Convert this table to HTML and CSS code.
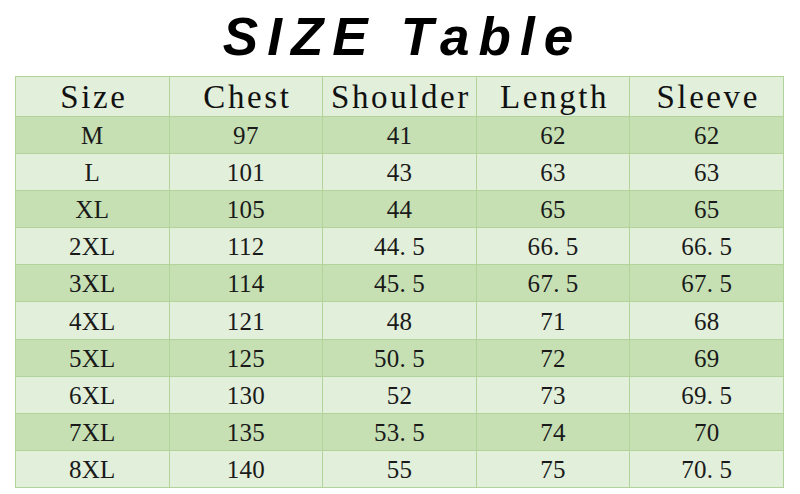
FILE: index.html
```html
<!DOCTYPE html>
<html lang="en">
<head>
<meta charset="utf-8">
<title>SIZE Table</title>
<link rel="stylesheet" href="styles.css">
</head>
<body>
<div class="page">
  <h1 class="title"><span>SIZE</span><span>Table</span></h1>
  <div class="table">
    <div class="row head"><div class="cell">Size</div><div class="cell">Chest</div><div class="cell">Shoulder</div><div class="cell">Length</div><div class="cell">Sleeve</div></div>
    <div class="row dark"><div class="cell">M</div><div class="cell">97</div><div class="cell">41</div><div class="cell">62</div><div class="cell">62</div></div>
    <div class="row light"><div class="cell">L</div><div class="cell">101</div><div class="cell">43</div><div class="cell">63</div><div class="cell">63</div></div>
    <div class="row dark"><div class="cell">XL</div><div class="cell">105</div><div class="cell">44</div><div class="cell">65</div><div class="cell">65</div></div>
    <div class="row light"><div class="cell">2XL</div><div class="cell">112</div><div class="cell">44<span class="dot">.</span>5</div><div class="cell">66<span class="dot">.</span>5</div><div class="cell">66<span class="dot">.</span>5</div></div>
    <div class="row dark"><div class="cell">3XL</div><div class="cell">114</div><div class="cell">45<span class="dot">.</span>5</div><div class="cell">67<span class="dot">.</span>5</div><div class="cell">67<span class="dot">.</span>5</div></div>
    <div class="row light"><div class="cell">4XL</div><div class="cell">121</div><div class="cell">48</div><div class="cell">71</div><div class="cell">68</div></div>
    <div class="row dark"><div class="cell">5XL</div><div class="cell">125</div><div class="cell">50<span class="dot">.</span>5</div><div class="cell">72</div><div class="cell">69</div></div>
    <div class="row light"><div class="cell">6XL</div><div class="cell">130</div><div class="cell">52</div><div class="cell">73</div><div class="cell">69<span class="dot">.</span>5</div></div>
    <div class="row dark"><div class="cell">7XL</div><div class="cell">135</div><div class="cell">53<span class="dot">.</span>5</div><div class="cell">74</div><div class="cell">70</div></div>
    <div class="row light"><div class="cell">8XL</div><div class="cell">140</div><div class="cell">55</div><div class="cell">75</div><div class="cell">70<span class="dot">.</span>5</div></div>
  </div>
</div>
</body>
</html>
```

FILE: styles.css
```css
html, body {
  margin: 0;
  padding: 0;
  background: #ffffff;
}

.page {
  width: 800px;
  height: 494px;
  display: flex;
  flex-direction: column;
}

.title {
  margin: 0;
  height: 76px;
  box-sizing: border-box;
  padding-top: 7px;
  padding-right: 4px;
  display: flex;
  justify-content: center;
  gap: 24px;
  font-family: "Liberation Sans", Arial, sans-serif;
  font-weight: bold;
  font-style: italic;
  font-size: 53px;
  line-height: 1.117;
  letter-spacing: 9px;
  color: #000;
}

.title span:last-child {
  margin-right: -9px;
}

.table {
  margin: 0 16px 0 15px;
  height: 411px;
  display: grid;
  grid-template-rows: repeat(11, 1fr);
  border-top: 1px solid #b2d49a;
  border-left: 1px solid #b2d49a;
}

.row {
  display: grid;
  grid-template-columns: repeat(5, 1fr);
}

.cell {
  display: flex;
  align-items: center;
  justify-content: center;
  border-right: 1px solid #b2d49a;
  border-bottom: 1px solid #b2d49a;
  font-family: "Liberation Serif", "Times New Roman", serif;
  font-size: 25px;
  letter-spacing: 0.3px;
  padding-top: 2px;
  color: #1a1a1a;
}

.dot {
  margin-right: 6px;
}

.head .cell {
  font-size: 33px;
  letter-spacing: 2.6px;
  padding-left: 3px;
  padding-top: 2px;
  color: #111;
}

.head, .light {
  background: #e2efda;
}

.dark {
  background: #c6e0b4;
}
```
